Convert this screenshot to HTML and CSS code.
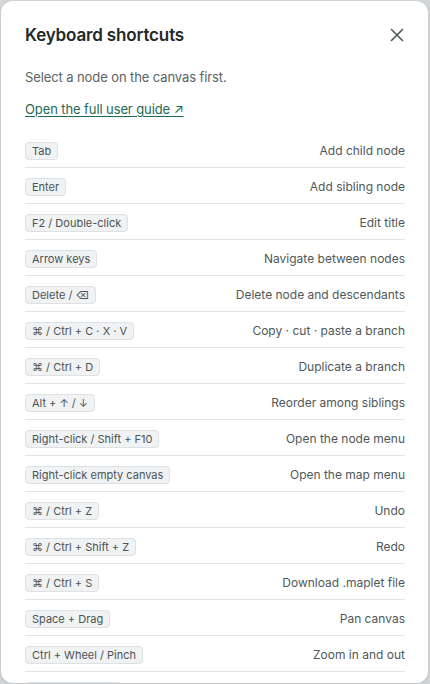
FILE: index.html
```html
<!DOCTYPE html>
<html lang="en">
<head>
    <meta charset="UTF-8">
    <meta name="viewport" content="width=device-width, initial-scale=1.0">
    <title>Keyboard shortcuts</title>
    <link rel="stylesheet" href="styles.css">
</head>
<body>
    <div class="dialog">
        <!-- 標題列 -->
        <div class="dialogHead">
            <h2>Keyboard shortcuts</h2>
            <button class="close" type="button" aria-label="Close">
                <svg width="14" height="14" viewBox="0 0 14 14">
                    <path d="M1.5 1.5 L12.5 12.5 M12.5 1.5 L1.5 12.5" stroke="currentColor" stroke-width="1.6" stroke-linecap="round" fill="none"/>
                </svg>
            </button>
        </div>

        <p class="hint">Select a node on the canvas first.</p>
        <a class="guide" href="#">Open the full user guide ↗</a>

        <!-- 快捷鍵列表 -->
        <ul class="shortcuts">
            <li><kbd>Tab</kbd><span>Add child node</span></li>
            <li><kbd>Enter</kbd><span>Add sibling node</span></li>
            <li><kbd>F2 / Double-click</kbd><span>Edit title</span></li>
            <li><kbd>Arrow keys</kbd><span>Navigate between nodes</span></li>
            <li><kbd>Delete / ⌫</kbd><span>Delete node and descendants</span></li>
            <li><kbd>⌘ / Ctrl + C · X · V</kbd><span>Copy · cut · paste a branch</span></li>
            <li><kbd>⌘ / Ctrl + D</kbd><span>Duplicate a branch</span></li>
            <li><kbd>Alt + ↑ / ↓</kbd><span>Reorder among siblings</span></li>
            <li><kbd>Right-click / Shift + F10</kbd><span>Open the node menu</span></li>
            <li><kbd>Right-click empty canvas</kbd><span>Open the map menu</span></li>
            <li><kbd>⌘ / Ctrl + Z</kbd><span>Undo</span></li>
            <li><kbd>⌘ / Ctrl + Shift + Z</kbd><span>Redo</span></li>
            <li><kbd>⌘ / Ctrl + S</kbd><span>Download .maplet file</span></li>
            <li><kbd>Space + Drag</kbd><span>Pan canvas</span></li>
            <li><kbd>Ctrl + Wheel / Pinch</kbd><span>Zoom in and out</span></li>
            <li><kbd>⌘ / Ctrl + 0 / Fit</kbd><span>Fit map to screen</span></li>
        </ul>
    </div>
</body>
</html>
```

FILE: styles.css
```css
* {
    margin: 0;
    padding: 0;
    box-sizing: border-box;
}
ul {
    list-style: none;
}
body {
    background-color: #d7dadc;
    font-family: Inter, "Noto Sans", "DejaVu Sans", sans-serif;
    height: 684px;
    overflow: hidden;
}
.dialog {
    width: 427px;
    height: 682px;
    margin: 1px;
    padding: 0 23px 0 24px;
    background-color: #fff;
    border-radius: 12px;
    box-shadow: 0 2px 8px rgba(0, 0, 0, 0.12);
    overflow: hidden;
}
.dialogHead {
    display: flex;
    align-items: center;
    justify-content: space-between;
    padding-top: 22px;
}
.dialogHead h2 {
    font-size: 17px;
    font-weight: 600;
    line-height: 24px;
    color: #1f2929;
    letter-spacing: -0.15px;
}
.close {
    width: 20px;
    height: 20px;
    display: flex;
    align-items: center;
    justify-content: center;
    border: none;
    background: none;
    color: #4d5757;
    margin-right: -2px;
}
.hint {
    margin-top: 20px;
    font-size: 13px;
    line-height: 20px;
    color: #5b6464;
    letter-spacing: -0.1px;
}
.guide {
    display: inline-block;
    margin-top: 12px;
    font-size: 13px;
    line-height: 20px;
    color: #1e6b50;
    letter-spacing: -0.1px;
    text-decoration: underline;
    text-underline-offset: 2px;
}
.shortcuts {
    margin-top: 13px;
}
.shortcuts li {
    display: flex;
    align-items: center;
    justify-content: space-between;
    padding: 9px 0 6px;
    border-bottom: 1px solid #e3e6e8;
}
.shortcuts kbd {
    font-family: Inter, "Noto Sans", "DejaVu Sans", sans-serif;
    font-size: 11px;
    line-height: 16px;
    padding: 0 6px;
    color: #4b5455;
    background-color: #f0f2f3;
    border: 1px solid #dde1e4;
    border-radius: 4px;
}
.shortcuts span {
    font-size: 12px;
    line-height: 20px;
    color: #4f5858;
}
```
